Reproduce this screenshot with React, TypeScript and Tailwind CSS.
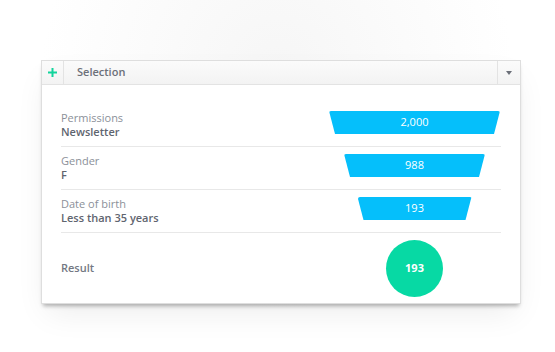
import React from "react";

type Row = { label: string; value: string; count: string; width: number };

const rows: Row[] = [
  { label: "Permissions", value: "Newsletter", count: "2,000", width: 171 },
  { label: "Gender", value: "F", count: "988", width: 141 },
  { label: "Date of birth", value: "Less than 35 years", count: "193", width: 114 },
];

function Funnel({ count, width }: { count: string; width: number }) {
  return (
    <div
      className="h-[23px] bg-[#05bffb] flex items-center justify-center text-[11px] text-white [clip-path:polygon(0_0,100%_0,calc(100%-6px)_100%,6px_100%)] rounded-[2px]"
      style={{ width }}
    >
      {count}
    </div>
  );
}

export default function App() {
  return (
    <div
      className="w-[555px] h-[352px] overflow-hidden bg-white bg-[radial-gradient(ellipse_at_50%_20%,#f6f6f6_0%,#ffffff_60%)] pt-[60px] pl-[41px]"
      style={{ fontFamily: '"Open Sans", "Noto Sans", sans-serif' }}
    >
      <div className="w-[480px] h-[244px] bg-white border border-[#dedede] shadow-[0_4px_4px_-2px_rgba(0,0,0,0.3),0_14px_30px_-6px_rgba(0,0,0,0.08)] flex flex-col">
        {/* Header */}
        <div className="h-[24px] flex border-b border-[#e3e3e3] bg-gradient-to-b from-[#fbfbfb] to-[#f3f3f3]">
          <div className="w-[22px] flex items-center justify-center border-r border-[#e3e3e3]">
            <svg width="9" height="9" viewBox="0 0 9 9">
              <path d="M3.5 0h2v3.5H9v2H5.5V9h-2V5.5H0v-2h3.5z" fill="#12d49c" />
            </svg>
          </div>
          <div className="flex-1 flex items-center pl-[13px] text-[11px] font-semibold text-[#6c7079]">
            Selection
          </div>
          <div className="w-[23px] flex items-center justify-center border-l border-[#e3e3e3]">
            <div className="w-0 h-0 border-l-[3.5px] border-r-[3.5px] border-t-[4px] border-l-transparent border-r-transparent border-t-[#6b6f78]" />
          </div>
        </div>

        {/* Body */}
        <div className="flex-1 px-[19px] pt-[19px] flex flex-col">
          {rows.map((r) => (
            <div key={r.label} className="h-[43px] border-b border-[#e8e8e8] flex items-center">
              <div className="flex-1 flex flex-col text-[11px] leading-[14px]">
                <span className="text-[#8b9099]">{r.label}</span>
                <span className="text-[#5f656f] font-semibold">{r.value}</span>
              </div>
              <div className="w-[171px] mr-[1px] flex justify-center -mt-[5px]">
                <Funnel count={r.count} width={r.width} />
              </div>
            </div>
          ))}
          <div className="flex-1 flex items-center">
            <div className="flex-1 text-[11px] font-semibold text-[#737883]">Result</div>
            <div className="w-[171px] mr-[1px] flex justify-center">
              <div className="w-[57px] h-[57px] rounded-full bg-[#07d9a4] flex items-center justify-center text-[11px] font-bold text-white">
                193
              </div>
            </div>
          </div>
        </div>
      </div>
    </div>
  );
}
